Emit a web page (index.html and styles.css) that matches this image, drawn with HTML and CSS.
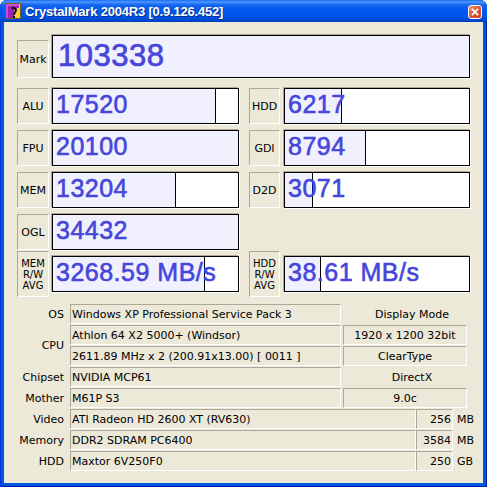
FILE: index.html
```html
<!DOCTYPE html>
<html>
<head>
<meta charset="utf-8">
<title>CrystalMark</title>
<link rel="stylesheet" href="styles.css">
</head>
<body>
<div class="window">
  <div class="titlebar">
    <svg class="appicon" viewBox="0 0 16 16" width="16" height="16">
      <rect x="0.5" y="0.5" width="15" height="15" fill="#F4D23A" stroke="#7A5A10"/>
      <path d="M1 1H14V5C11 5 9 7 9 10V15H1Z" fill="#9A24B4"/>
      <path d="M1 1H14V3H3V15H1Z" fill="#C850D8"/>
      <path d="M6 5C8 3 12 4 12 7C12 9 10 10 10 12L8 12C8 9 10 9 10 7C10 6 8 5.5 7 6.5Z" fill="#101010"/>
      <rect x="8" y="13" width="2" height="2" fill="#101010"/>
    </svg>
    <span class="title">CrystalMark 2004R3 [0.9.126.452]</span>
    <span class="close">
      <svg viewBox="0 0 14 14" width="14" height="14"><path d="M4 4L10 10M10 4L4 10" stroke="#fff" stroke-width="2" stroke-linecap="square"/></svg>
    </span>
  </div>
  <div class="client">
    <div class="mark-row">
      <div class="label mark-label">Mark</div>
      <div class="meter big" style="--p:100%"><span>103338</span></div>
    </div>
    <div class="bench">
      <div class="cell left"><div class="label">ALU</div><div class="meter" style="--p:162px">17520</div></div>
      <div class="cell right"><div class="label">HDD</div><div class="meter" style="--p:56px">6217</div></div>
      <div class="cell left"><div class="label">FPU</div><div class="meter" style="--p:100%">20100</div></div>
      <div class="cell right"><div class="label">GDI</div><div class="meter" style="--p:80px">8794</div></div>
      <div class="cell left"><div class="label">MEM</div><div class="meter" style="--p:122px">13204</div></div>
      <div class="cell right"><div class="label">D2D</div><div class="meter" style="--p:27px">3071</div></div>
      <div class="cell left"><div class="label">OGL</div><div class="meter" style="--p:100%">34432</div></div>
      <div class="cell right empty"></div>
      <div class="cell left"><div class="label tall">MEM<br>R/W<br>AVG</div><div class="meter" style="--p:151px">3268.59 MB/s</div></div>
      <div class="cell right"><div class="label tall">HDD<br>R/W<br>AVG</div><div class="meter" style="--p:35px">38.61 MB/s</div></div>
    </div>
    <div class="info">
      <div class="key">OS</div>
      <div class="val">Windows XP Professional Service Pack 3</div>
      <div class="head">Display Mode</div>

      <div class="key span2">CPU</div>
      <div class="val">Athlon 64 X2 5000+ (Windsor)</div>
      <div class="val center">1920 x 1200 32bit</div>
      <div class="val">2611.89 MHz x 2 (200.91x13.00) [ 0011 ]</div>
      <div class="val center">ClearType</div>

      <div class="key">Chipset</div>
      <div class="val">NVIDIA MCP61</div>
      <div class="head">DirectX</div>

      <div class="key">Mother</div>
      <div class="val">M61P S3</div>
      <div class="val center">9.0c</div>
    </div>
    <div class="info lower">
      <div class="key">Video</div>
      <div class="val">ATI Radeon HD 2600 XT (RV630)</div>
      <div class="val num">256</div>
      <div class="unit">MB</div>

      <div class="key">Memory</div>
      <div class="val">DDR2 SDRAM PC6400</div>
      <div class="val num">3584</div>
      <div class="unit">MB</div>

      <div class="key">HDD</div>
      <div class="val">Maxtor 6V250F0</div>
      <div class="val num">250</div>
      <div class="unit">GB</div>
    </div>
  </div>
</div>
</body>
</html>
```
FILE: styles.css
```css
* { box-sizing: border-box; }

html, body {
  margin: 0;
  padding: 0;
  background: #ffffff;
}

.window {
  width: 487px;
  height: 487px;
  display: flex;
  flex-direction: column;
  background: #0055E5;
  border-radius: 7px 7px 0 0;
  padding: 0 4px 4px;
  box-shadow: inset 1px 0 0 #0831D9, inset -1px 0 0 #001EA0, inset 0 -1px 0 #001EA0;
  overflow: hidden;
}

.titlebar {
  height: 22px;
  margin: 0 -4px;
  flex: none;
  display: flex;
  align-items: center;
  gap: 4px;
  padding-left: 5px;
  background: linear-gradient(#1C6CF0 0%, #4A96FF 9%, #1766EE 22%, #0058EE 45%, #0056E8 75%, #0047D0 92%, #003CB8 100%);
  border-radius: 7px 7px 0 0;
}

.appicon { flex: none; }

.title {
  font-family: "Liberation Sans", Arial, sans-serif;
  font-weight: bold;
  font-size: 13px;
  letter-spacing: -0.2px;
  color: #ffffff;
  text-shadow: 1px 1px 0 #0A2A8A;
  white-space: nowrap;
}

.close {
  margin-left: auto;
  margin-right: 5px;
  margin-top: 2px;
  width: 14px;
  height: 14px;
  border: 1px solid #ffffff;
  border-radius: 3px;
  background: linear-gradient(135deg, #EE9A7E 0%, #DD5A38 45%, #C8401E 100%);
  display: flex;
  align-items: center;
  justify-content: center;
}

.close svg { width: 12px; height: 12px; }

.client {
  flex: 1;
  background: #ECE9D8;
  padding: 13px 13px 0;
  font-family: "DejaVu Sans", Verdana, sans-serif;
  font-size: 11px;
  color: #000000;
}

.mark-row {
  display: flex;
  align-items: flex-end;
  gap: 3px;
}

.label {
  flex: none;
  width: 32px;
  height: 36px;
  border: 1px solid;
  border-color: #ACA899 #ffffff #ffffff #ACA899;
  display: flex;
  align-items: center;
  justify-content: center;
  text-align: center;
  font-size: 11px;
}

.mark-label { height: 38px; }

.label.tall {
  height: 46px;
  margin: -5px 0;
  font-size: 10px;
  line-height: 11px;
}

.meter {
  height: 36px;
  flex: 1;
  border: 1px solid #000000;
  box-shadow: -1px -1px 0 #ACA899, 1px 1px 0 #ffffff;
  background: linear-gradient(to right, #F0F0FF 0, #F0F0FF var(--p), #000000 var(--p), #000000 calc(var(--p) + 1px), #ffffff calc(var(--p) + 1px));
  font-family: "Liberation Sans", Arial, sans-serif;
  color: #4646DA;
  -webkit-text-stroke: 0.6px #4646DA;
  font-size: 25px;
  line-height: 25px;
  letter-spacing: 0.5px;
  padding: 3px 0 0 3px;
  white-space: nowrap;
  overflow: hidden;
}

.meter.big {
  height: 43px;
  font-size: 31px;
  line-height: 31px;
  letter-spacing: 0.5px;
  -webkit-text-stroke: 0.7px #4646DA;
  padding: 4px 0 0 5px;
}

.bench {
  margin-top: 10px;
  display: grid;
  grid-template-columns: 222px 221px;
  column-gap: 10px;
  row-gap: 6px;
}

.cell {
  display: flex;
  align-items: center;
  height: 36px;
}

.cell.left { gap: 3px; }
.cell.right { gap: 4px; }
.cell.right .label { width: 31px; }

.info {
  margin: 12px -13px 0;
  display: grid;
  grid-template-columns: 66px 271px 126px;
  grid-auto-rows: 20px;
  row-gap: 1px;
}

.info.lower {
  margin-top: 1px;
  grid-template-columns: 66px 346px 37px 1fr;
}

.key {
  display: flex;
  align-items: center;
  justify-content: flex-end;
  padding-right: 6px;
  white-space: nowrap;
}

.key.span2 { grid-row: span 2; }

.val {
  border: 1px solid;
  border-color: #ACA899 #ffffff #ffffff #ACA899;
  display: flex;
  align-items: center;
  padding-left: 1px;
  white-space: nowrap;
  overflow: hidden;
}

.info .center {
  margin-left: 2px;
  justify-content: center;
  padding-left: 0;
}

.head {
  display: flex;
  align-items: center;
  justify-content: center;
  margin-left: 2px;
  padding-left: 14px;
  white-space: nowrap;
}

.num {
  justify-content: flex-end;
  padding-right: 1px;
}

.unit {
  display: flex;
  align-items: center;
  padding-left: 4px;
}
```
